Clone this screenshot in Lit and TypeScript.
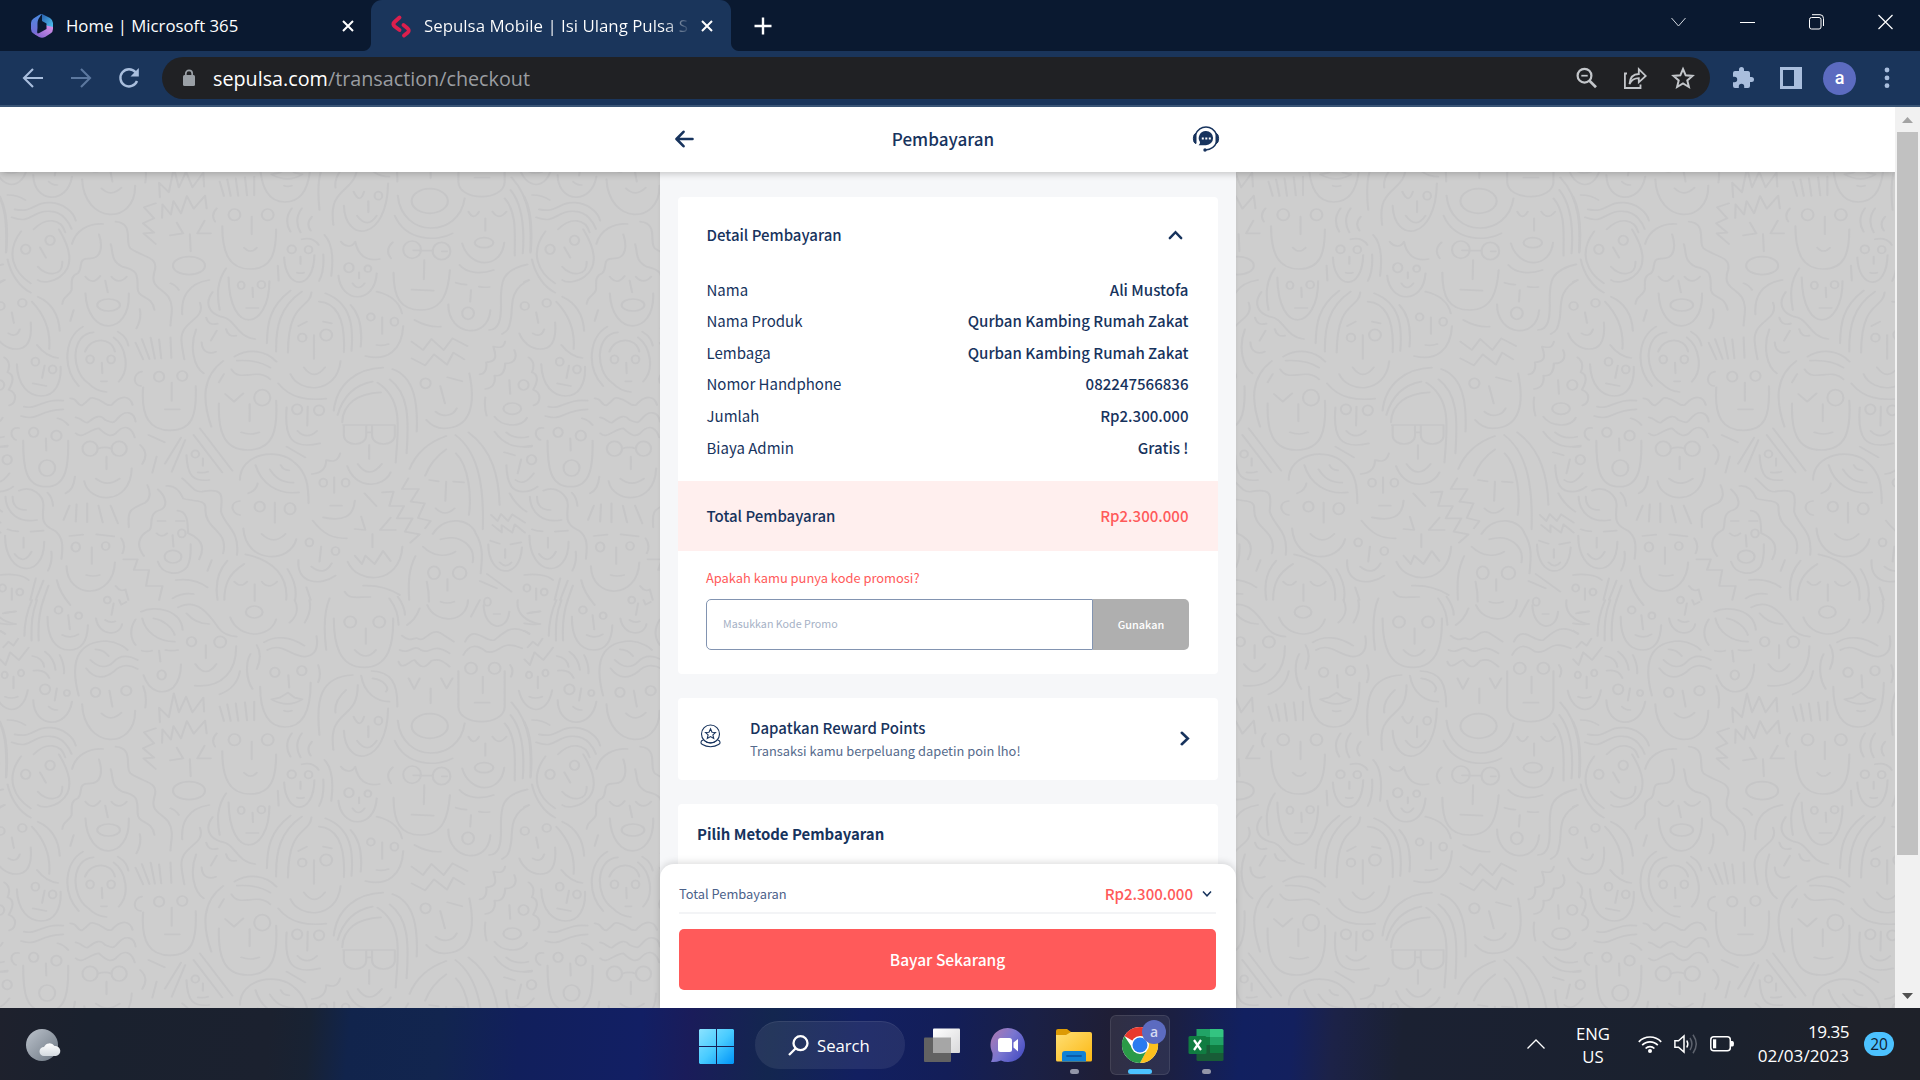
import { LitElement, html, svg, css } from "lit";
import { customElement } from "lit/decorators.js";

/* One tile of the doodle wallpaper: stroke paths, plus ellipses as [cx, cy, rx, ry]. */
const UPPER_STROKES = `M12,38L38,34M0,70q20,5 38,2M0,92l12,10M8,142L20,125 32,137 43,116M0,178L13,195 24,157 45,180 68,143
M76,0C62,40 58,70 58,108M88,0C76,40 74,70 75,122M103,0C92,40 90,80 92,122
M113,50C112,110 130,150 165,150C200,150 208,110 209,75M162,45L166,88M148,105q20,12 38,-2
M228,55C235,110 285,110 290,72M270,10L265,45M250,60q12,10 24,4M283,0l5,14 12,-8
M322,58C305,90 312,120 322,135M335,35C370,15 430,30 434,90M338,55C345,95 375,125 415,125M365,55C390,60 410,85 415,105
M423,22C470,-10 500,50 520,85C530,102 545,108 562,110M443,40C460,65 480,72 497,72
M337,152q12,4 24,0M393,150q15,4 30,0M378,152L381,185M341,225C355,280 390,285 412,262C428,240 430,215 430,193
M489,135V175M464,192q25,45 50,0M561,138C562,210 530,265 463,257M570,213C565,250 545,272 522,283
M547,52C565,115 640,120 656,58M700,0C710,25 705,50 688,68M735,0C740,25 735,45 724,68
M595,162C582,190 585,240 600,267M610,135C622,160 618,185 610,207
M627,127C655,105 690,110 723,137M635,150C670,125 690,170 725,170C755,165 755,130 752,108
M685,225L687,263M645,298L665,293 684,278 700,293 718,298Q684,325 645,298M675,332q8,4 18,0M618,260C618,340 640,381 677,381C715,381 738,340 738,248M756,195q8,30 0,52
M783,-5C768,40 770,100 775,150M793,55C793,130 805,202 865,202C925,202 935,130 934,55M869,85V132M843,150q26,36 50,0M925,-5C945,30 945,50 947,75M945,-10q17,30 17,55M997,25q-10,35 -30,50
M1015,15C1035,75 1110,70 1112,0M1140,0L1119,50M1047,5q15,8 32,0
M955,107C975,130 985,110 992,115C1010,130 1020,85 1045,98L1078,125M950,150C975,165 980,130 1000,150C1025,165 1025,125 1068,160M947,185C955,215 975,180 985,180C1005,215 1015,195 1025,182C1045,175 1055,185 1068,200
M1105,125C1125,70 1155,130 1175,120C1200,95 1215,70 1257,100M1101,165C1115,130 1135,135 1155,155C1190,165 1185,115 1240,145
M1147,230V280M1128,308h35M1089,213V320C1090,380 1198,380 1199,320V213M1212,195q10,15 2,35
M971,235L984,267 997,235M1048,235L1061,265 1075,235M1023,265V310M945,362C955,490 1090,490 1104,370M938,422C965,500 1040,500 1075,475
M838,225C760,230 750,300 759,405M822,270C800,295 795,320 797,338M850,255C850,330 820,330 800,370C788,390 790,430 792,450M885,235C915,240 925,265 917,275M858,227C865,280 895,305 925,305M883,213C930,215 945,250 944,320
M840,350q15,40 25,0M875,378V412M848,422q25,42 47,0M817,392C820,505 920,500 922,325
M1149,15C1150,90 1205,100 1210,35M1173,42h15M1230,0C1225,40 1250,65 1282,72M1253,40l28,-5
M135,265L130,302M116,320q8,10 20,10M79,300C80,385 160,390 171,305M77,168q25,5 28,33M80,212q28,-5 37,22M107,155q22,20 25,55M142,165q12,30 10,55
M187,287C160,160 200,125 252,123C280,125 300,145 303,150M227,148C245,148 253,160 258,168M215,180C235,205 255,205 270,185C285,165 305,165 327,180M205,205C225,240 250,235 270,215C285,195 305,190 327,207
M260,272L267,320M241,340q22,28 47,-2M195,312C200,450 322,450 321,332M340,258q10,30 5,65
M32,230v35M12,290q14,8 30,0M66,270C55,350 0,345 -13,272`;
const UPPER_RINGS = [
  [139,30,9,11],[187,47,8,10],[384,225,10,14],[455,125,11,14],[523,126,14,17],[604,36,20,18],[653,217,11,14],[717,212,11,14],
  [832,66,14,17],[901,66,14,17],[1119,205,14,17],[1175,205,14,17],[1021,378,43,37],[899,362,9,12],[107,268,12,15],[159,279,7,9],
  [227,277,11,14],[300,272,12,14],[11,225,7,10],[50,219,7,10],[1158,5,8,12],[255,0,8,10],
];
const LOWER_STROKES = `M18,75q25,0 42,15M35,118C80,130 80,95 120,98C150,100 175,125 180,152M28,142C75,165 75,120 120,124C150,125 165,160 170,177M80,178C110,140 145,145 155,187
M50,184C10,250 35,310 73,340M140,178C170,240 175,290 143,320C125,337 100,340 90,330M18,268C25,310 45,350 73,368M95,232l14,31M90,290C110,320 150,320 148,275M0,335l10,-5
M0,80C20,130 18,200 15,245
M171,222C180,180 210,160 245,162M235,193C245,230 240,265 215,265C180,265 200,290 185,310C165,320 172,340 170,360C165,380 150,375 148,402M263,222C270,250 262,270 290,290C325,300 327,310 327,350C325,390 360,370 367,420M275,155C320,160 295,220 310,235C345,265 375,260 368,300C355,350 380,350 400,380C415,410 405,440 405,467M203,320q17,28 35,-2M265,320q17,25 36,0M250,332l6,35M203,370C207,500 310,500 306,370M332,417q5,30 -8,58M175,420l-8,33
M380,82L378,38 401,67 413,-5 425,52 442,5 457,52 483,8 485,50M385,144L386,103 406,134 412,93 430,130 444,78 460,116 487,77 491,115M370,100L342,112 366,145 340,160 366,188 341,190 370,222M420,158L435,190 404,196M486,152L469,190 501,190M451,192l2,52M405,340q12,5 20,20
M522,35l10,43M540,28l8,50M560,25l6,53M582,22l5,54M604,20v56M598,140V193M580,233q15,20 30,0M528,168C528,250 545,297 595,297C645,297 656,250 656,178M515,115q-15,20 -4,40
M693,115q-20,35 -3,70M717,115q-20,35 -3,72M741,140q-15,20 -3,42M771,195C790,220 792,270 787,318M768,253q3,50 -10,80M660,287l2,45
M717,208C740,200 753,215 757,225M714,260v22M706,308q8,3 16,0M675,262C678,360 745,365 747,255
M537,295C515,335 515,375 522,420M543,322C545,500 640,480 640,333M600,353l1,29M585,414h29M497,330C445,340 430,385 433,433
M505,366C485,400 497,430 525,440C560,445 560,500 606,507M475,398C490,450 430,450 431,510C432,530 435,550 438,568M466,478C450,530 460,590 484,610M490,443q5,25 27,18M515,482l-14,30M537,477q5,25 24,20M479,517C480,550 500,552 513,545
M322,518l18,50M337,507l18,60M358,503l10,63M378,508l5,57M405,502l2,62M337,605C315,610 315,645 335,648M408,638v55M392,718h35M340,652C335,740 355,781 405,781C455,781 468,740 465,648
M197,470C155,500 145,590 187,648M222,487C170,490 165,600 210,640C225,660 240,665 253,666M202,545C215,500 265,500 273,545M280,485C300,500 303,515 305,527M270,502C300,530 310,600 282,635M242,578l1,32M240,634h14
M28,427l5,32M20,490q20,15 27,-12M73,457C77,520 60,537 38,537C15,537 -5,515 -12,490M76,395C110,440 120,490 117,537M90,380C125,400 140,440 142,483M88,525Q110,560 138,564
M106,587l-6,37M78,640l32,8M40,582C42,650 70,678 98,678C130,678 146,640 144,590M10,562q18,15 8,45q22,10 3,52q20,10 13,35q-3,10 -12,12
M57,710C90,720 100,685 150,692M50,738C90,755 90,720 150,718M137,745q15,5 25,20
M167,685C185,685 180,705 195,706C215,690 210,680 225,685C245,690 250,710 265,705C290,670 310,680 315,705M180,742C195,745 200,760 208,758C230,735 240,735 250,750C270,760 270,760 280,745C300,715 320,730 322,755M180,790C195,810 215,775 235,775C255,800 265,800 275,790C300,755 315,780 320,802
M232,836q17,-8 33,0M253,860v38M228,926q27,27 56,0M200,933C210,1000 310,1010 313,895M333,825q22,25 5,57M372,860l-10,48
M109,805l1,37M55,812C55,890 60,950 110,950C160,950 163,880 162,812M45,774C20,770 25,805 38,810M0,830l18,-3M178,920q-3,40 -22,50
M353,795l38,22M430,803l-38,78M440,810l-32,95M460,795L528,907M475,775L552,902M482,865v22M470,907q12,3 24,-2M443,855C445,920 460,935 497,930
M433,925C450,940 460,968 480,965C540,950 525,990 525,1025C535,1070 570,1080 563,1155M395,948C420,945 430,970 435,985C450,995 490,985 488,1015C485,1080 545,1080 530,1150M350,945C360,970 355,990 345,998C300,1020 305,1030 306,1072M375,958C395,980 400,1010 380,1020C350,1030 365,1070 355,1080C325,1100 325,1130 342,1158M422,1022C450,1025 445,1070 447,1090C485,1110 485,1140 473,1168
M375,1053h18M418,1053h20M372,1090q12,15 25,0M410,1095l2,35M375,1175C385,1215 425,1220 445,1190C455,1165 453,1145 453,1122
M530,573C480,620 480,690 502,770M532,612l-12,25M535,672L556,695 578,670M593,702v52M573,787q22,10 43,0M520,700C518,780 530,840 588,840C650,840 660,780 656,692M557,560C590,535 630,540 657,575M563,572C590,570 620,575 642,593M550,598C570,640 610,590 642,628
M740,367C735,420 685,390 684,548M717,365C665,410 655,470 656,545M690,362C640,410 635,460 634,520M758,395C810,400 820,470 817,547M773,370C835,400 840,470 835,543M833,405C860,440 860,490 857,530M709,468l20,-13M768,455l20,5M746,495v72M722,592q24,42 50,0M690,612C710,670 800,675 809,573M661,640C690,685 730,692 775,686
M895,365C930,375 950,400 955,430M908,442v50M895,525q15,3 28,-3M958,468C955,540 920,575 868,558M985,450q30,22 62,20
M731,710l-1,57M707,783q22,28 46,0M681,712C675,800 690,840 760,820M681,830l44,32
M793,722C800,640 850,595 910,593M802,735C815,680 840,645 885,635M813,757C815,700 850,670 905,667M932,597C985,620 993,700 990,785M926,628C970,670 972,740 966,850M897,638C960,690 945,780 940,878M815,765H938M817,765V798C820,830 868,830 870,798V765M884,765V798C886,830 936,830 938,798V765M870,787h14M877,825v42M850,882q27,48 57,0M825,888C845,960 910,955 928,907
M808,850C800,885 780,870 775,870C775,900 760,910 741,912M794,922v47M785,1007h27M843,992C840,1040 815,1055 768,1042M743,1052C770,1095 790,1105 824,1105M866,970l28,38
M570,930C570,850 660,830 700,878C730,910 733,950 733,1000M607,885C620,940 660,975 710,967M641,898C655,925 670,938 697,938M667,885q5,15 20,16M612,940q-3,22 -22,30M570,993C545,995 548,1030 570,1035M653,998v60M622,1092q28,35 56,0M578,1075C585,1185 690,1180 704,1107
M970,925L955,957 995,957 976,995 1009,1000 993,1044 1023,1053 1010,1075M908,967L935,965 925,1008 960,1008 943,1045 980,1045 962,1085 997,1093 975,1118
M1060,798C1010,820 985,860 973,897M1060,838C1035,860 1020,885 1010,917M1083,850C1115,890 1120,980 1114,1035M1082,795C1140,850 1150,960 1147,1078M1113,787C1170,840 1185,920 1187,1005M1020,930l22,4M1077,935l25,2M1060,935l-2,58M1035,1015q22,28 45,0
M858,1040L868,1080 843,1077M928,1043L903,1080 940,1080M885,1092v40M843,1157L860,1182 868,1157 890,1182 910,1143 928,1173M826,1175C850,1245 950,1245 956,1130
M763,1130l-4,45M740,1190q30,30 48,-10M709,1170C705,1240 760,1250 797,1217M1028,1092C1060,1030 1120,1050 1130,1090C1150,1130 1145,1170 1142,1210M1047,1108C1095,1090 1130,1130 1123,1177M1005,1130C1030,1160 1060,1162 1082,1145
M1167,1035L1182,1053 1190,1032 1207,1053 1217,1033 1247,1058M1170,1065L1192,1087 1192,1065 1217,1088 1223,1063 1247,1088M1165,1112l22,9M1213,1123l25,-6M1200,1137v27M1187,1177q15,20 28,0M1160,1123C1160,1220 1235,1235 1240,1132
M18,1078q10,6 25,6M73,1085l30,-3M56,1103v30M35,1152q22,35 40,-7M12,1097C12,1220 105,1230 105,1115M122,1145q3,30 -8,57M13,980C15,1030 45,1060 88,1050M30,980C30,1010 45,1020 62,1020M45,962C75,945 105,975 103,1010C100,1050 100,1065 130,1082C150,1100 150,1130 146,1167M113,968q12,15 13,40M-35,970q15,35 40,55
M165,1007l-14,43M182,1003l-2,52M207,1000v57M234,1007l10,50M263,1007l17,53M165,1098l32,-4M229,1093l42,6M218,1132v50M205,1215q15,6 32,0M158,1188C160,1290 270,1290 273,1177M288,1105q12,20 3,45M293,1168L327,1168 318,1200 354,1200 347,1248 386,1248 378,1290
M503,1170l-10,33M517,1290C510,1240 520,1200 540,1172M533,1290C533,1240 545,1210 580,1182M583,1153C650,1170 685,1220 680,1290M683,1197q25,50 18,93M557,1235q15,20 30,0M622,1235q15,25 36,0M605,1243v50M418,1230C450,1225 475,1235 493,1252M410,1285q22,-18 50,-13
M728,1252l10,38M863,1247C900,1245 925,1255 950,1275M819,1265C830,1290 850,1280 880,1281M987,1158C970,1200 970,1240 972,1290M1063,1227v35M1014,1235q5,30 5,60M1140,1233l40,22M1157,1212l58,53M135,1230C140,1260 150,1280 167,1305
M0,1215C25,1210 55,1215 68,1230M28,1255v35M85,1225L72,1290M103,1232L85,1290M115,1247L103,1290M275,1248C285,1265 292,1262 298,1258L305,1290
M933,217q-20,22 -4,48M982,241h15M998,242h30M1050,244h12M1008,270l-1,58M978,359l52,3M935,308C935,380 950,420 1000,420C1055,420 1065,360 1069,300
M810,215C820,230 835,235 844,215C850,255 870,275 902,267M853,307v18M838,340q13,25 28,0M804,317C810,400 890,405 895,310
M1113,125q12,28 25,0M1170,125q15,28 33,0M1153,145v37M1098,220C1115,295 1190,300 1198,218M1092,285C1110,312 1145,312 1173,300M1199,85C1230,130 1222,200 1223,257M1213,60C1245,110 1245,200 1242,250M1215,22C1265,90 1262,180 1260,248
M1253,283C1190,300 1190,340 1190,390C1192,450 1185,480 1162,480M1257,330C1205,360 1220,420 1213,450C1210,475 1205,485 1193,492M1083,338q12,5 25,6M1138,350q12,3 25,1M1119,360l-2,35M1065,403C1065,500 1160,510 1165,420
M978,515L1005,540 1025,507 1054,540 1075,505 1110,528M978,565L1010,586 1031,553 1062,584 1077,548 1103,568M1063,622l35,12M1046,648l11,52M1035,725C1050,742 1075,740 1085,715M1115,610C1130,700 1120,775 1055,775C1035,775 1020,760 1013,750
M1200,515C1195,540 1180,530 1172,530C1180,560 1180,575 1155,577C1158,600 1150,612 1140,613M1222,540C1232,570 1215,582 1200,580C1200,600 1195,620 1175,617C1178,640 1170,655 1153,657M1210,630l2,42M1153,682q-3,30 3,55M1175,740C1190,770 1240,775 1252,743M1175,785C1200,830 1230,833 1263,830M1203,787C1220,805 1240,805 1255,800
M1198,847l25,9M1238,868l-8,42M1225,930q20,20 43,-20M1203,885C1205,950 1220,965 1243,965C1260,965 1272,955 1277,950`;
const LOWER_RINGS = [
  [61,238,11,14],[119,211,11,14],[258,405,27,18],[449,287,38,27],[557,134,14,17],[636,134,14,17],[693,238,10,12],[733,239,9,11],
  [573,346,8,11],[621,344,9,11],[378,620,12,15],[433,618,12,15],[214,568,9,12],[264,568,9,12],[53,399,10,12],[1,408,10,12],
  [84,575,9,12],[125,598,9,12],[-2,645,12,15],[214,836,18,22],[283,836,18,22],[80,787,11,14],[134,797,12,15],[112,894,19,24],
  [17,869,11,14],[464,852,9,11],[432,1090,9,12],[411,1160,20,19],[623,683,19,24],[718,503,10,12],[775,495,14,17],[881,441,9,11],
  [937,455,9,12],[706,718,12,15],[758,721,12,15],[768,938,9,12],[821,938,9,12],[617,1010,12,15],[689,1016,13,17],[735,1117,9,12],
  [797,1143,9,12],[180,1131,10,14],[251,1128,9,12],[1031,1208,14,19],[1092,1209,16,19],[6,1254,8,11],[47,1266,8,10],
  [979,239,21,26],[1049,243,21,26],[829,293,11,14],[874,296,8,10],[1150,218,22,15],[1112,430,14,18],[1011,640,12,15],[1217,716,21,17],
];
const TILE_W = 1245.8;
const TILE_H = 1575;

const rings = (list: number[][]) =>
  list.map(([cx, cy, rx, ry]) => svg`<ellipse cx=${cx} cy=${cy} rx=${rx} ry=${ry}></ellipse>`);

@customElement("doodle-wallpaper")
class DoodleWallpaper extends LitElement {
  static styles = css`
    :host { display: block; background: #cecece; overflow: hidden; }
    svg { display: block; }
    .ink { fill: none; stroke: #c6c6c7; stroke-width: 5; stroke-linecap: round; stroke-linejoin: round; }
  `;
  render() {
    const places = [-1, 0, 1, 2, 3].flatMap((c) => [0, 1].map((r) => [c * TILE_W, r * TILE_H]));
    return html`<svg width="1895" height="836" viewBox="0 6 4502 2508" preserveAspectRatio="none">
      <defs>
        <g id="tile" class="ink">
          <path d=${LOWER_STROKES}></path>${rings(LOWER_RINGS)}
          <g transform="translate(0 -285)"><path d=${UPPER_STROKES}></path>${rings(UPPER_RINGS)}</g>
        </g>
      </defs>
      ${places.map(([x, y]) => svg`<use href="#tile" x=${x} y=${y}></use>`)}
    </svg>`;
  }
}

@customElement("browser-chrome")
class BrowserChrome extends LitElement {
  static styles = css`
    :host { display: block; font-family: "Open Sans", "Noto Sans", sans-serif; color: #fff; }
    svg { display: block; flex: none; overflow: visible; }
    .strip { display: flex; height: 51px; background: #0a1930; align-items: center; }
    .tab { display: flex; align-items: center; height: 51px; box-sizing: border-box; font-size: 16.75px; white-space: nowrap; }
    .first { width: 371px; padding-left: 31px; }
    .active { width: 360px; padding-left: 19px; background: #1a355b; border-radius: 11px 11px 0 0; font-size: 16.87px; }
    .foot { align-self: flex-end; width: 8px; height: 8px; background: radial-gradient(circle at 100% 0, #0a1930 7.5px, #1a355b 8.5px); }
    .foot-left { background: radial-gradient(circle at 0 0, #0a1930 7.5px, #1a355b 8.5px); margin-left: -8px; }
    .label { margin-left: 13px; }
    .fade { width: 266px; margin-left: 12px; color: transparent; background: linear-gradient(90deg, #fff 240px, #1a355b 267px); -webkit-background-clip: text; background-clip: text; }
    .x1 { margin-left: auto; margin-right: 17px; }
    .x2 { margin-left: 11px; }
    .plus { margin-left: 15px; }
    .controls { display: flex; margin-left: auto; margin-right: 27px; gap: 54px; align-items: center; height: 43px; align-self: flex-start; }
    .bar { display: flex; align-items: center; height: 54px; background: #1a355b; border-bottom: 2px solid #3a5576; padding-left: 21px; color: #a9bedd; }
    .nav { display: flex; gap: 24px; }
    .dim { color: #5c789f; }
    .address { display: flex; align-items: center; box-sizing: border-box; width: 1548px; height: 42px; margin-left: 21px; border-radius: 21px; background: #202124; padding: 0 15px 0 20px; color: #c3c6ca; }
    .lock { color: #9aa0a6; }
    .url { margin-left: 17px; margin-top: 2px; font-size: 19.75px; line-height: 28px; color: #9a9da1; }
    .host { color: #fff; }
    .tools { display: flex; gap: 24px; margin-left: auto; }
    .right { display: flex; align-items: center; margin-left: 21px; }
    .avatar { width: 33px; height: 33px; border-radius: 50%; background: #5c6bc0; color: #fff; font: 500 18px/32px Roboto, sans-serif; text-align: center; margin: 0 19px 0 20px; }
    .panel { margin-left: 24px; }
  `;
  cross(cls: string) {
    return html`<svg class=${cls} width="12" height="12" viewBox="0 0 12 12"><path d="M1 1L11 11M11 1L1 11" stroke="#fff" stroke-width="2"></path></svg>`;
  }
  render() {
    return html`
      <div class="strip">
        <div class="tab first">
          <svg width="22" height="24" viewBox="0 0 22 24">
            <defs>
              <linearGradient id="m1" x1="0" y1="0" x2="0" y2="1"><stop offset="0" stop-color="#4a8be0"></stop><stop offset="1" stop-color="#7a68d4"></stop></linearGradient>
              <linearGradient id="m2" x1="0" y1="0" x2="1" y2="1"><stop offset="0" stop-color="#2a5fae"></stop><stop offset="1" stop-color="#4fc6f2"></stop></linearGradient>
              <linearGradient id="m3" x1="0" y1="1" x2="1" y2="0"><stop offset="0" stop-color="#7b61cd"></stop><stop offset="1" stop-color="#dd93ea"></stop></linearGradient>
            </defs>
            <path d="M11 0L19 4Q22 6 22 9V14L15.5 12V9.500L11 7Z" fill="url(#m2)"></path>
            <path d="M11 0Q9.500 0 8 1L2.500 4.500Q0 6 0 9V15Q0 18 2.500 19.500L7 22Q5.500 18 6.500 14V9Q6.500 5 11 0Z" fill="url(#m1)"></path>
            <path d="M22 13V15Q22 18 19.500 19.500L14 23Q11 24.500 8 23L3 19.800Q8 20 11 17.500L15.500 15V11.500Z" fill="url(#m3)"></path>
          </svg>
          <span class="label">Home | Microsoft 365</span>
          ${this.cross("x1")}
        </div>
        <div class="foot foot-left"></div>
        <div class="tab active">
          <svg width="22" height="24" viewBox="0 0 22 24"><path d="M9.500 3.500L4.500 8Q2 10.200 4.800 12.500L9.500 16M13.500 11L17.200 14Q20 16.200 17.800 18.500L14 21.500" fill="none" stroke="#dc1f4d" stroke-width="3.900" stroke-linecap="round" stroke-linejoin="round"></path></svg>
          <span class="label fade">Sepulsa Mobile | Isi Ulang Pulsa S</span>
          ${this.cross("x2")}
        </div>
        <div class="foot"></div>
        <svg class="plus" width="18" height="18" viewBox="0 0 18 18"><path d="M9 0.500V17.500M0.500 9H17.500" stroke="#fff" stroke-width="2.400"></path></svg>
        <div class="controls">
          <svg width="15" height="16" viewBox="0 0 15 16"><path d="M0.500 4L7.500 12L14.500 4" fill="none" stroke="#d3d8df"></path></svg>
          <svg width="15" height="16" viewBox="0 0 15 16"><path d="M0 8.500H15" stroke="#fff"></path></svg>
          <svg width="15" height="16" viewBox="0 0 15 16"><rect x="0.500" y="3.500" width="11.500" height="11.500" rx="2" fill="none" stroke="#fff"></rect><path d="M3 0.700H11Q14.500 0.700 14.500 4.500V12" fill="none" stroke="#fff"></path></svg>
          <svg width="15" height="16" viewBox="0 0 15 16"><path d="M0.500 1L14.500 15M14.500 1L0.500 15" stroke="#fff" stroke-width="1.200"></path></svg>
        </div>
      </div>
      <div class="bar">
        <div class="nav">
          <svg width="24" height="24" viewBox="0 0 24 24" fill="none" stroke="currentColor" stroke-width="2.100"><path d="M22 12H3.500M12 3L3 12L12 21"></path></svg>
          <svg class="dim" width="24" height="24" viewBox="0 0 24 24" fill="none" stroke="currentColor" stroke-width="2.100"><path d="M2 12H20.500M12 3L21 12L12 21"></path></svg>
          <svg width="24" height="24" viewBox="0 0 24 24" fill="none" stroke="currentColor" stroke-width="2.400"><path d="M20 15A8.600 8.600 0 1 1 18.600 6.300"></path><path d="M21.800 2V10.500H13.500Z" fill="currentColor" stroke="none"></path></svg>
        </div>
        <div class="address">
          <svg class="lock" width="14" height="18" viewBox="0 0 14 18"><rect x="1" y="6" width="12" height="11" rx="1.500" fill="currentColor"></rect><path d="M3.800 7V4.500A3.200 3.200 0 0 1 10.200 4.500V7" fill="none" stroke="currentColor" stroke-width="1.700"></path></svg>
          <span class="url"><span class="host">sepulsa.com</span>/transaction/checkout</span>
          <div class="tools">
            <svg width="24" height="24" viewBox="0 0 24 24" fill="none" stroke="currentColor" stroke-width="2.200"><circle cx="9.500" cy="9.700" r="6.900"></circle><path d="M14.500 14.700L21 21.200" stroke-width="2.700"></path><path d="M6.300 9.700H12.700" stroke-width="1.700"></path></svg>
            <svg width="24" height="24" viewBox="0 0 24 24" fill="none" stroke="currentColor" stroke-width="1.800"><path d="M4 7.500H1.900V22H17.500V18.500"></path><path d="M6.500 18C7 11.500 10.500 8 15.800 8V3.200L22.700 9.900L15.800 16.300V12.200C11.500 12.200 8.500 14 6.500 18Z"></path></svg>
            <svg width="24" height="24" viewBox="0 0 24 24" fill="none" stroke="currentColor" stroke-width="2"><path d="M12 3L14.700 9.300L21.500 9.900L16.300 14.400L17.900 21L12 17.500L6.100 21L7.700 14.400L2.500 9.900L9.300 9.300Z"></path></svg>
          </div>
        </div>
        <div class="right">
          <svg width="24" height="24" viewBox="0 0 24 24" fill="currentColor"><path d="M20.500 11H19V7C19 5.900 18.100 5 17 5H13V3.500A2.500 2.500 0 0 0 8 3.500V5H4A2 2 0 0 0 2 7V10.800H3.500A2.700 2.700 0 0 1 3.500 16.200H2V20A2 2 0 0 0 4 22H7.800V20.500A2.700 2.700 0 0 1 13.200 20.500V22H17A2 2 0 0 0 19 20V16H20.500A2.500 2.500 0 0 0 20.500 11Z"></path></svg>
          <svg class="panel" width="24" height="24" viewBox="0 0 24 24"><path d="M1 1H23V23H1ZM4 4V20H15V4Z" fill="currentColor" fill-rule="evenodd"></path></svg>
          <div class="avatar">a</div>
          <svg width="24" height="24" viewBox="0 0 24 24" fill="currentColor"><circle cx="12" cy="4" r="2.400"></circle><circle cx="12" cy="11.900" r="2.400"></circle><circle cx="12" cy="19.700" r="2.400"></circle></svg>
        </div>
      </div>`;
  }
}

const DETAILS = [
  ["Nama", "Ali Mustofa"],
  ["Nama Produk", "Qurban Kambing Rumah Zakat"],
  ["Lembaga", "Qurban Kambing Rumah Zakat"],
  ["Nomor Handphone", "082247566836"],
  ["Jumlah", "Rp2.300.000"],
  ["Biaya Admin", "Gratis !"],
];

@customElement("checkout-page")
class CheckoutPage extends LitElement {
  static styles = css`
    :host { display: grid; grid-template: 901px / 1895px 25px; font-family: "Noto Sans CJK JP", "Noto Sans CJK SC", sans-serif; color: #17335d; font-size: 15px; line-height: 22px; }
    svg { display: block; flex: none; }
    .view { display: grid; grid-template: 65px 836px / 660px 576px 659px; overflow: hidden; }
    .topbar { grid-area: 1 / 1 / 2 / 4; background: #fff; box-shadow: 0 2px 7px rgba(0, 0, 0, 0.2); z-index: 2; display: flex; justify-content: center; }
    .topbar-inner { display: flex; align-items: center; justify-content: space-between; width: 546px; padding: 0 16px 2px 15px; margin-left: 1px; }
    .title { font-size: 17.070px; font-weight: 500; margin-top: 1px; }
    doodle-wallpaper { grid-area: 2 / 1 / 3 / 4; }
    .column { grid-area: 2 / 2 / 3 / 3; background: #f6f7f9; z-index: 1; display: grid; grid-template-rows: 692px 144px; box-shadow: 0 0 4px rgba(0, 0, 0, 0.06); }
    .cards { overflow: hidden; padding: 25px 18px 0; display: flex; flex-direction: column; gap: 24px; }
    .card { background: #fff; border-radius: 4px; flex: none; }
    .head { display: flex; justify-content: space-between; align-items: center; height: 76px; padding: 0 35.500px 1px 28.500px; font-weight: 500; }
    .row { display: flex; justify-content: space-between; align-items: center; height: 31.550px; padding: 0 29.500px 0 28.500px; }
    .row b, .sum b { font-weight: 500; font-size: 15.060px; }
    .sum { display: flex; justify-content: space-between; align-items: center; height: 70px; margin-top: 17.700px; padding: 0 29.500px 0 28.500px; background: #ffefee; font-weight: 500; }
    .red { color: #ff5a5a; }
    .promo { height: 123px; box-sizing: border-box; padding: 17px 29px 0 28px; }
    .ask { font-size: 12.880px; line-height: 20px; color: #ff5a5a; }
    .field { display: flex; height: 51px; margin-top: 11px; }
    .input { box-sizing: border-box; width: 387px; border: 1px solid #8294b1; border-radius: 5px 0 0 5px; padding-left: 16px; font-size: 10.700px; line-height: 48px; color: #a5b1c5; }
    .use { flex: 1; background: #afafaf; color: #fff; border-radius: 0 5px 5px 0; font-size: 10.850px; font-weight: 500; line-height: 51px; text-align: center; }
    .reward { display: flex; align-items: center; height: 82px; padding: 0 28px 0 22px; }
    .medal { margin-bottom: 5px; }
    .reward-text { margin-left: 28px; margin-right: auto; }
    .reward-title { font-weight: 500; line-height: 22px; margin-top: 1px; }
    .reward-note { font-size: 12.850px; line-height: 20px; color: #566b8c; margin: 2px 0 1px; }
    .methods { height: 100px; padding: 19px 19px; font-weight: 700; font-size: 14.930px; }
    .sheet { background: #fff; border-radius: 14px 14px 0 0; box-shadow: 0 -2px 7px rgba(0, 0, 0, 0.13); padding: 0 20px 0 19px; }
    .sheet-row { display: flex; align-items: center; height: 48px; padding-top: 12px; box-sizing: border-box; }
    .sheet-line { height: 2px; background: #f3f4f6; }
    .sheet-label { font-size: 12.850px; color: #4c628a; margin-right: auto; }
    .sheet-sum { font-weight: 500; font-size: 15.060px; margin-right: 9px; }
    .pay { height: 61px; margin-top: 15px; border-radius: 5px; background: #ff5a5a; color: #fff; text-align: center; font-size: 15.500px; font-weight: 500; line-height: 60px; }
    .scroll { background: #f1f1f1; display: flex; flex-direction: column; align-items: center; }
    .arrow { height: 25px; display: flex; align-items: center; }
    .thumb { width: 21px; height: 723px; background: #c1c1c1; margin-right: 1px; }
    .down { margin-top: auto; }
  `;
  render() {
    return html`
      <div class="view">
        <div class="topbar"><div class="topbar-inner">
          <svg width="19" height="18" viewBox="0 0 19 18" fill="none" stroke="#17335d" stroke-width="2.600" stroke-linecap="round" stroke-linejoin="round"><path d="M17.500 9H2M8.500 1.800L1.500 9L8.500 16.200"></path></svg>
          <span class="title">Pembayaran</span>
          <svg width="28" height="26" viewBox="0 0 28 26" fill="none" stroke="#17335d"><path d="M3.500 8.500C6 3 10 1 14 1S22 3 24.500 8.500" stroke-width="1.500"></path><path d="M4 7.500C0.500 7.500 0.500 17.500 4 17.500ZM24 7.500C27.500 7.500 27.500 17.500 24 17.500Z" fill="#17335d" stroke-width="1"></path><path d="M24.500 16.500C22.500 21.500 19 23.500 13.500 24" stroke-width="1.500"></path><circle cx="13" cy="24" r="1.700" fill="#17335d" stroke="none"></circle><path d="M14 5A7 7 0 1 1 14 19.200H6.600Q8.300 17.900 8 16A7 7 0 0 1 14 5Z" fill="#17335d" stroke="none"></path><path d="M9.800 12.500h2M13.300 12.500h2M16.800 12.500h2" stroke="#fff" stroke-width="1.800"></path></svg>
        </div></div>
        <doodle-wallpaper></doodle-wallpaper>
        <div class="column">
          <div class="cards">
            <div class="card">
              <div class="head"><span>Detail Pembayaran</span>
                <svg width="15" height="10" viewBox="0 0 15 10"><path d="M1.800 8.200L7.500 2.200L13.200 8.200" fill="none" stroke="#17335d" stroke-width="2.400" stroke-linecap="round"></path></svg>
              </div>
              ${DETAILS.map(([k, v]) => html`<div class="row"><span>${k}</span><b>${v}</b></div>`)}
              <div class="sum"><span>Total Pembayaran</span><b class="red">Rp2.300.000</b></div>
              <div class="promo">
                <div class="ask">Apakah kamu punya kode promosi?</div>
                <div class="field"><div class="input">Masukkan Kode Promo</div><div class="use">Gunakan</div></div>
              </div>
            </div>
            <div class="card reward">
              <svg class="medal" width="22" height="24" viewBox="0 0 22 24" fill="none" stroke="#17335d" stroke-width="1.100"><circle cx="10.500" cy="10" r="9"></circle><path d="M10.500 4.800L12 8.200L15.500 8.500L12.900 10.900L13.700 14.500L10.500 12.600L7.300 14.500L8.100 10.900L5.500 8.500L9 8.200Z"></path><path d="M3 16C0.500 17 0.200 19.500 2.500 20.500C7 23.500 14 23.500 18.500 20.500C20.800 19.500 20.500 17 18 16M3.500 15.500C7 20 14 20 17.500 15.500"></path></svg>
              <div class="reward-text"><div class="reward-title">Dapatkan Reward Points</div><div class="reward-note">Transaksi kamu berpeluang dapetin poin lho!</div></div>
              <svg width="10" height="15" viewBox="0 0 10 15"><path d="M1.800 1.800L7.800 7.500L1.800 13.200" fill="none" stroke="#17335d" stroke-width="2.600" stroke-linecap="round"></path></svg>
            </div>
            <div class="card methods">Pilih Metode Pembayaran</div>
          </div>
          <div class="sheet">
            <div class="sheet-row"><span class="sheet-label">Total Pembayaran</span><span class="sheet-sum red">Rp2.300.000</span>
              <svg width="14" height="8" viewBox="0 0 14 8"><path d="M1 1.500L5 5.800L9 1.500" fill="none" stroke="#17335d" stroke-width="1.500"></path></svg></div>
            <div class="sheet-line"></div>
            <div class="pay">Bayar Sekarang</div>
          </div>
        </div>
      </div>
      <div class="scroll">
        <div class="arrow"><svg width="11" height="6" viewBox="0 0 11 6"><path d="M0 6L5.500 0L11 6Z" fill="#a3a3a3"></path></svg></div>
        <div class="thumb"></div>
        <div class="arrow down"><svg width="11" height="6" viewBox="0 0 11 6"><path d="M0 0L5.500 6L11 0Z" fill="#505050"></path></svg></div>
      </div>`;
  }
}

@customElement("task-bar")
class TaskBar extends LitElement {
  static styles = css`
    :host { display: flex; height: 72px; color: #fff; font-family: "Open Sans", "Noto Sans", sans-serif; background: linear-gradient(95deg, #1e212d 0, #1a212e 90px, #1b212f 270px, #182233 310px, #11244c 350px, #12254f 440px, #111f5c 520px, #121f64 640px, #1a1c5a 690px, #13264f 770px, #121f60 860px, #131e58 950px, #1a2046 1030px, #1f1e35 1110px, #1b1f42 1170px, #112060 1240px, #13205e 1290px, #1c2248 1330px, #1b2132 1400px, #1a212e 1700px, #1e212a 1850px, #1e2129 1920px); }
    svg { display: block; flex: none; overflow: visible; }
    .weather { width: 673px; padding: 20px 0 0 26px; }
    .apps { display: flex; padding-top: 7px; width: 798px; }
    .app { display: flex; flex-direction: column; align-items: center; box-sizing: border-box; width: 60px; height: 60px; padding-top: 12px; border: 1px solid transparent; margin-left: 6px; }
    .near { margin-left: -6px; }
    .on { background: rgba(255, 255, 255, 0.08); border-color: rgba(255, 255, 255, 0.09); border-radius: 6px; }
    .dot { width: 9px; height: 5px; border-radius: 3px; background: #9396a8; margin-top: 5px; }
    .wide { width: 24px; background: #4cc2ff; }
    .start { margin-top: 13.500px; }
    .search { display: flex; align-items: center; box-sizing: border-box; width: 150px; height: 48px; border-radius: 24px; margin: 6px 13px 0 21px; padding-left: 33px; background: rgba(255, 255, 255, 0.08); border-top: 1px solid rgba(255, 255, 255, 0.08); font-size: 16.700px; }
    .search span { margin-left: 8px; margin-top: -1px; }
    .badge { font-size: 14px; font-weight: 600; fill: #d5d9f2; text-anchor: middle; }
    .tray { display: flex; align-items: center; height: 72px; flex: 1; font-size: 16.700px; line-height: 23px; }
    .more { margin-left: 30px; }
    .lang { width: 60px; text-align: center; margin-left: 18px; margin-top: 1px; }
    .wifi { margin-left: 15px; }
    .sound, .power { margin-left: 12px; }
    .clock { width: 115px; text-align: right; font-size: 17.100px; line-height: 24px; margin-top: -1px; letter-spacing: 0.050px; }
    .time { letter-spacing: -0.500px; }
    .count { width: 30px; height: 24px; border-radius: 12px; background: #4cc2ff; color: #10202e; text-align: center; font-size: 15.500px; line-height: 24px; margin-left: 15px; }
  `;
  render() {
    return html`
      <div class="weather">
        <svg width="36" height="34" viewBox="0 0 36 34"><defs>
          <linearGradient id="moon" x1="0" y1="0" x2="1" y2="1"><stop offset="0" stop-color="#bcc3cc"></stop><stop offset="1" stop-color="#6c7682"></stop></linearGradient>
          <linearGradient id="cloud" x1="0" y1="0" x2="0" y2="1"><stop offset="0" stop-color="#fff"></stop><stop offset="1" stop-color="#d4dae0"></stop></linearGradient></defs>
          <circle cx="16" cy="17" r="16" fill="url(#moon)"></circle>
          <path d="M18 28A4.500 4.500 0 0 1 18 19A6 6 0 0 1 28.500 18A5 5 0 0 1 30 28Z" fill="url(#cloud)"></path></svg>
      </div>
      <div class="apps">
        <svg class="start" width="35" height="35" viewBox="0 0 35 35"><defs><linearGradient id="win" gradientUnits="userSpaceOnUse" x1="0" y1="0" x2="35" y2="35"><stop offset="0" stop-color="#8be3ff"></stop><stop offset="0.500" stop-color="#48cbff"></stop><stop offset="1" stop-color="#0094f8"></stop></linearGradient></defs>
          <path d="M1 0H17V17H0V1ZM18 0H34L35 1V17H18ZM0 18H17V35H1L0 34ZM18 18H35V34L34 35H18Z" fill="url(#win)"></path></svg>
        <div class="search">
          <svg width="21" height="21" viewBox="0 0 21 21" fill="none" stroke="#fff" stroke-width="2.300"><circle cx="12.500" cy="8.200" r="7"></circle><path d="M7.500 13.500L1 20"></path></svg>
          <span>Search</span>
        </div>
        <div class="app near">
          <svg width="36" height="36" viewBox="0 0 36 36"><defs>
            <linearGradient id="tv" x1="0" y1="0" x2="1" y2="1"><stop offset="0" stop-color="#fff"></stop><stop offset="1" stop-color="#d8d8da"></stop></linearGradient></defs>
            <rect x="0" y="9.500" width="27" height="24.500" rx="1" fill="#626262"></rect><rect x="9" y="0.500" width="27" height="24.500" rx="1" fill="url(#tv)"></rect><rect x="9" y="9.500" width="18" height="15.500" fill="#a6a6a6"></rect></svg>
        </div>
        <div class="app">
          <svg width="36" height="36" viewBox="0 0 36 36"><defs>
            <linearGradient id="chat" x1="0" y1="0.200" x2="0.900" y2="0.800"><stop offset="0" stop-color="#a879b4"></stop><stop offset="0.500" stop-color="#7a76d0"></stop><stop offset="1" stop-color="#4c52c4"></stop></linearGradient></defs>
            <path d="M18 0A17 17 0 1 1 11 32.500Q6 34.500 1 34Q3 31 2.500 25A17 17 0 0 1 18 0Z" fill="url(#chat)"></path>
            <rect x="8" y="10" width="14" height="14" rx="2.500" fill="#fff"></rect><path d="M23.500 14.500L28 11V23.500L23.500 19.500Z" fill="#fff"></path></svg>
        </div>
        <div class="app">
          <svg width="36" height="36" viewBox="0 0 36 36"><defs>
            <linearGradient id="fold" x1="0" y1="0" x2="1" y2="1"><stop offset="0" stop-color="#ffdf74"></stop><stop offset="1" stop-color="#fcb813"></stop></linearGradient></defs>
            <path d="M0 3Q0 1 2 1H11L15 4V11H0Z" fill="#dd9b05"></path><path d="M0 7H10L15 4H34Q36 4 36 6V32Q36 33.500 34.500 33.500H1.500Q0 33.500 0 32Z" fill="url(#fold)"></path>
            <path d="M6 33.500V26Q6 23 9 23H27Q30 23 30 26V33.500Z" fill="#1081d5"></path><path d="M11 28H25" stroke="#0b5aa8" stroke-width="1.800" stroke-linecap="round"></path></svg>
          <div class="dot"></div>
        </div>
        <div class="app on">
          <svg width="36" height="36" viewBox="0 0 36 36">
            <circle cx="18" cy="17" r="18" fill="#fff"></circle>
            <g transform="translate(0 -1)">
              <path d="M18 18L2.400 9A18 18 0 0 1 33.600 9L26 9.800H18Z" fill="#e8382d"></path>
              <path d="M33.600 9A18 18 0 0 1 18 36L25.200 22.500L18 9Z" fill="#fdc01d"></path>
              <path d="M18 36A18 18 0 0 1 2.400 9L11 22L25.200 22.500Z" fill="#2a9a48"></path>
              <circle cx="18" cy="18" r="9" fill="#fff"></circle><circle cx="18" cy="18" r="7.500" fill="#2b7af0"></circle>
            </g>
            <circle cx="32" cy="4" r="12" fill="#5c6bc0"></circle><text class="badge" x="32" y="9">a</text></svg>
          <div class="dot wide"></div>
        </div>
        <div class="app">
          <svg width="36" height="36" viewBox="0 0 36 36"><g transform="translate(0 -1)">
            <path d="M8.500 2H22V10H8.500Z" fill="#21a366"></path><path d="M22 2H34Q35.500 2 35.500 3.500V10H22Z" fill="#33c481"></path><path d="M8.500 10H22V18H8.500Z" fill="#107c41"></path><path d="M22 10H35.500V18H22Z" fill="#21a366"></path>
            <path d="M8.500 18H22V26H8.500Z" fill="#185c37"></path><path d="M22 18H35.500V26H22Z" fill="#107c41"></path><path d="M8.500 26H35.500V32.500Q35.500 34 34 34H10Q8.500 34 8.500 32.500Z" fill="#185c37"></path>
            <rect x="0.500" y="9" width="18" height="18" rx="1.500" fill="#107c41"></rect><path d="M6 13L13 23M13 13L6 23" stroke="#fff" stroke-width="2.200"></path></g></svg>
          <div class="dot"></div>
        </div>
      </div>
      <div class="tray">
        <svg class="more" width="18" height="10" viewBox="0 0 18 10"><path d="M0.500 9.500L9 1L17.500 9.500" fill="none" stroke="#fff" stroke-width="1.300"></path></svg>
        <div class="lang">ENG<br />US</div>
        <svg class="wifi" width="24" height="20" viewBox="0 0 24 20" fill="none" stroke="#fff" stroke-width="1.700"><path d="M0.800 7.800A15.500 15.500 0 0 1 23.200 7.800M4.200 11.200A10.700 10.700 0 0 1 19.800 11.200M7.600 14.500A6.200 6.200 0 0 1 16.400 14.500"></path><circle cx="12" cy="17" r="2" fill="#fff" stroke="none"></circle></svg>
        <svg class="sound" width="24" height="20" viewBox="0 0 24 20" fill="none" stroke="#fff" stroke-width="1.500"><path d="M0.900 6.800H4.500L10 1.900V18.100L4.500 13.200H0.900Z"></path><path d="M12.800 6.500Q14.800 10 12.800 13.500"></path><path d="M16 4Q19.800 10 16 16M19 0.800Q25.500 10 19 19.200" stroke="#5d626d"></path></svg>
        <svg class="power" width="24" height="20" viewBox="0 0 24 20"><rect x="0.800" y="2.800" width="19.500" height="14" rx="3" fill="none" stroke="#fff" stroke-width="1.500"></rect><rect x="3" y="5.300" width="3.200" height="9" fill="#fff"></rect><path d="M21 7H22.500Q24 7 24 9.800T22.500 12.600H21Z" fill="#fff"></path></svg>
        <div class="clock"><span class="time">19.35</span><br />02/03/2023</div>
        <div class="count">20</div>
      </div>`;
  }
}

@customElement("app-root")
class AppRoot extends LitElement {
  static styles = css`
    :host { display: block; width: 1920px; height: 1080px; overflow: hidden; background: #fff; }
  `;
  render() {
    return html`<browser-chrome></browser-chrome><checkout-page></checkout-page><task-bar></task-bar>`;
  }
}
